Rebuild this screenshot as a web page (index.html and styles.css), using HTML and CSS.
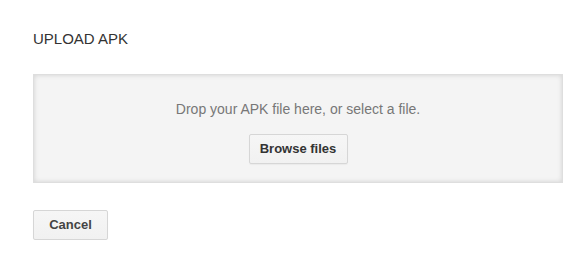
FILE: index.html
```html
<!DOCTYPE html>
<html lang="en">
<head>
    <meta charset="UTF-8">
    <title>Upload APK</title>
    <link rel="stylesheet" href="styles.css">
</head>
<body>
    <div class="upload-dialog">
        <h2 class="dialog-title">UPLOAD APK</h2>

        <div class="drop-zone">
            <div class="drop-text">Drop your APK file here, or select a file.</div>
            <button class="btn btn-browse" type="button">Browse files</button>
        </div>

        <div class="dialog-actions">
            <button class="btn btn-cancel" type="button">Cancel</button>
        </div>
    </div>
</body>
</html>
```

FILE: styles.css
```css
body {
    margin: 0;
    font-family: "Liberation Sans", Arial, sans-serif;
    background-color: #fff;
    color: #333;
}
.upload-dialog {
    padding: 30px 22px 0 33px;
}
.dialog-title {
    margin: 0;
    font-size: 15px;
    font-weight: normal;
    line-height: 17px;
    color: #333;
}
.drop-zone {
    margin-top: 27px;
    height: 107px;
    box-sizing: content-box;
    border: 1px solid #dedede;
    background-color: #f4f4f4;
    box-shadow: inset 0 0 5px rgba(0,0,0,0.14);
    display: flex;
    flex-direction: column;
    align-items: center;
    padding: 0;
}
.drop-text {
    margin-top: 26px;
    font-size: 14px;
    line-height: 16px;
    color: #777;
}
.btn {
    font-family: "Liberation Sans", Arial, sans-serif;
    font-size: 13px;
    font-weight: bold;
    color: #444;
    height: 30px;
    line-height: 28px;
    padding: 0;
    white-space: nowrap;
    border: 1px solid #d6d6d6;
    border-radius: 2px;
    background: linear-gradient(#f6f6f6, #f1f1f1);
    box-shadow: 0 1px 1px rgba(0,0,0,0.04);
}
.btn-browse {
    margin-top: 17px;
    width: 99px;
    color: #333;
}
.dialog-actions {
    margin-top: 27px;
}
.btn-cancel {
    width: 75px;
}
```
